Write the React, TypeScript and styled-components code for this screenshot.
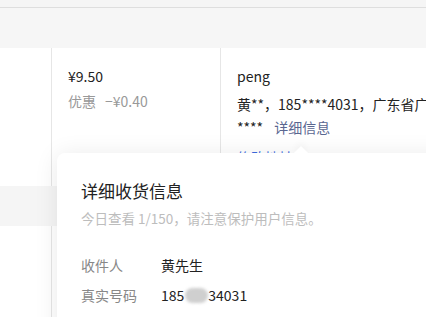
import React from "react";
import styled, { createGlobalStyle } from "styled-components";

const GlobalStyle = createGlobalStyle`
  html, body {
    margin: 0;
    padding: 0;
    background: #fff;
  }
  body {
    font-family: "Noto Sans CJK SC", "Noto Sans", sans-serif;
    color: #222;
  }
`;

export default function App() {
  return (
    <Page>
      <GlobalStyle />
      <TopStrip />
      <HeadRow />
      <Row $height={138}>
        <Cell $width={52} />
        <Cell $width={169}>
          <Price>¥9.50</Price>
          <Discount>
            <span>优惠</span>
            <span>−¥0.40</span>
          </Discount>
        </Cell>
        <Cell>
          <Buyer>peng</Buyer>
          <Address>黄**，185****4031，广东省广</Address>
          <Address>
            ****<DetailLink>详细信息</DetailLink>
          </Address>
          <ActionLink>修改地址</ActionLink>
        </Cell>
      </Row>
      <GroupBand />
      <Row $height={100}>
        <Cell $width={52} />
        <Cell $width={169} />
        <Cell />
      </Row>

      <Popover>
        <Title>详细收货信息</Title>
        <Hint>今日查看 1/150，请注意保护用户信息。</Hint>
        <InfoList>
          <InfoRow>
            <Label>收件人</Label>
            <Value>黄先生</Value>
          </InfoRow>
          <InfoRow>
            <Label>真实号码</Label>
            <Value>
              185<Masked />34031
            </Value>
          </InfoRow>
        </InfoList>
      </Popover>
    </Page>
  );
}

const Page = styled.div`
  position: relative;
  width: 426px;
  height: 317px;
  overflow: hidden;
  background: #fff;
`;

const TopStrip = styled.div`
  height: 7px;
  background: #f5f5f5;
  border-bottom: 1px solid #dedede;
`;

const HeadRow = styled.div`
  height: 40px;
  background: #f6f6f6;
`;

const Row = styled.div<{ $height: number }>`
  display: flex;
  height: ${(p) => p.$height}px;
`;

const Cell = styled.div<{ $width?: number }>`
  flex: ${(p) => (p.$width ? `0 0 ${p.$width}px` : "1 1 0")};
  min-width: 0;
  box-sizing: border-box;
  border-right: ${(p) => (p.$width ? "1px solid #e6e6e6" : "none")};
  padding: 16px 0 0 16px;
  overflow: hidden;
  white-space: nowrap;
  font-size: 14px;
  line-height: 24px;
`;

const Price = styled.div`
  color: #222;
`;

const Discount = styled.div`
  display: flex;
  gap: 9px;
  margin-top: 1px;
  color: #999;
`;

const Buyer = styled.div`
  margin-bottom: 5px;
`;

const Address = styled.div`
  line-height: 23px;
`;

const DetailLink = styled.span`
  margin-left: 11px;
  color: #5a6690;
`;

const ActionLink = styled.div`
  margin-top: 6px;
  color: #3d6be0;
`;

const GroupBand = styled.div`
  height: 40px;
  background: #f5f5f5;
`;

const Popover = styled.div`
  position: absolute;
  left: 57px;
  top: 153px;
  width: 420px;
  height: 200px;
  box-sizing: border-box;
  padding: 26px 24px;
  background: #fff;
  border-radius: 8px;
  box-shadow: 0 2px 24px rgba(0, 0, 0, 0.09);

  &::before {
    content: "";
    position: absolute;
    left: 239px;
    top: -5px;
    width: 10px;
    height: 10px;
    background: #fff;
    transform: rotate(45deg);
    box-shadow: -3px -3px 6px rgba(0, 0, 0, 0.03);
  }
`;

const Title = styled.div`
  font-size: 17px;
  line-height: 24px;
  color: #222;
`;

const Hint = styled.div`
  margin-top: 5px;
  font-size: 13.5px;
  line-height: 20px;
  color: #bdbdbd;
`;

const InfoList = styled.div`
  display: flex;
  flex-direction: column;
  gap: 8px;
  margin-top: 26px;
`;

const InfoRow = styled.div`
  display: flex;
  font-size: 14px;
  line-height: 22px;
`;

const Label = styled.span`
  width: 80px;
  color: #888;
`;

const Value = styled.span`
  color: #222;
  display: flex;
  align-items: center;
`;

const Masked = styled.span`
  display: inline-block;
  width: 23px;
  height: 15px;
  margin: 0 0 0 1px;
  border-radius: 8px;
  background: #cfcfcf;
  filter: blur(1.5px);
`;
